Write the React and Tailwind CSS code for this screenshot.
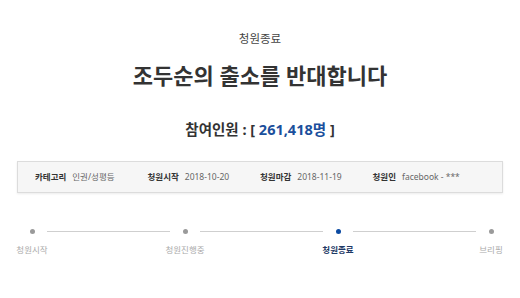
import React from "react";

const font = { fontFamily: '"Noto Sans", "Noto Sans CJK KR", sans-serif' };

function Item({ label, value }) {
  return (
    <div className="flex items-center gap-[6px] whitespace-nowrap">
      <span className="font-bold text-[#333] text-[8.5px]">{label}</span>
      <span className="text-[#666] text-[8.5px]">{value}</span>
    </div>
  );
}

function Step({ label, active }) {
  return (
    <div className="flex w-[30px] flex-col items-center">
      <div className={`h-[5px] w-[5px] rounded-full ${active ? "bg-[#0b4aa2]" : "bg-[#9a9a9a]"}`} />
      <div className={`mt-[11px] whitespace-nowrap text-[8.5px] leading-[10px] ${active ? "font-bold text-[#1f3a66]" : "text-[#aaaaaa]"}`}>
        {label}
      </div>
    </div>
  );
}

function Seg() {
  return <div className="mt-[2px] h-px flex-1 self-start bg-[#cfcfcf]" />;
}

export default function App() {
  return (
    <div className="h-[298px] w-[520px] overflow-hidden bg-white" style={font}>
      <div className="pt-[31px] text-center text-[11.5px] leading-[16px] text-[#444]">청원종료</div>
      <div className="mt-[14px] text-center text-[22px] font-bold leading-[28px] text-[#333]">조두순의 출소를 반대합니다</div>
      <div className="mt-[30px] text-center text-[14.5px] font-bold leading-[20px] text-[#333]">
        참여인원 : [ <span className="text-[#1b4f9c]">261,418명</span> ]
      </div>
      <div className="mx-[17px] mt-[22px] grid h-[32px] grid-cols-4 items-center border border-[#dcdcdc] bg-[#f6f6f6] px-[17px] shadow-[0_1px_2px_rgba(0,0,0,0.08)]">
        <Item label="카테고리" value="인권/성평등" />
        <Item label="청원시작" value="2018-10-20" />
        <Item label="청원마감" value="2018-11-19" />
        <Item label="청원인" value="facebook - ***" />
      </div>
      <div className="ml-[17px] mt-[36px] flex w-[489px]">
        <Step label="청원시작" />
        <Seg />
        <Step label="청원진행중" />
        <Seg />
        <Step label="청원종료" active />
        <Seg />
        <Step label="브리핑" />
      </div>
    </div>
  );
}
